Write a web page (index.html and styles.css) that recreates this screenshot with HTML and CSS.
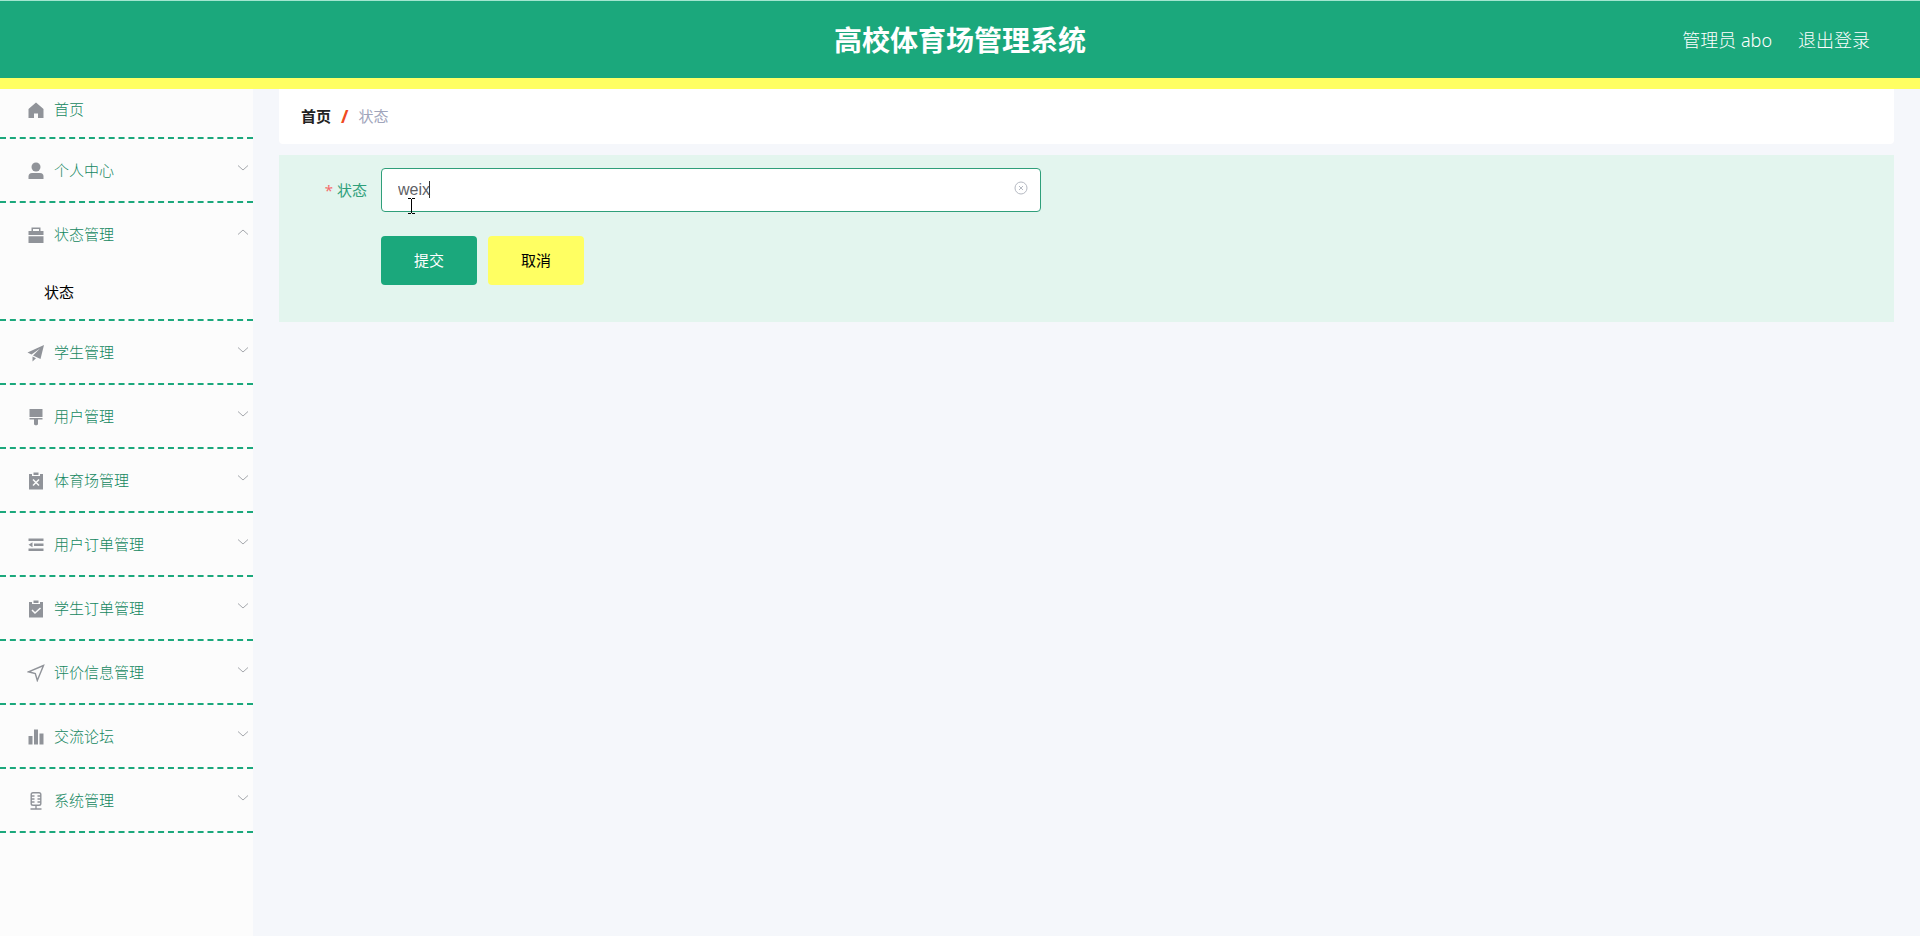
FILE: index.html
```html
<!DOCTYPE html>
<html lang="zh-CN">
<head>
  <meta charset="UTF-8">
  <meta name="viewport" content="width=device-width, initial-scale=1.0">
  <title>高校体育场管理系统</title>
  <link rel="stylesheet" href="styles.css">
</head>
<body>
  <svg class="sprite" aria-hidden="true">
    <symbol id="arrow" viewBox="0 0 12 12"><path d="M1 3.5l5 4.5 5-4.5" fill="none" stroke="#a5a8ad"/></symbol>
  </svg>

  <header class="header">
    <h1 class="title">高校体育场管理系统</h1>
    <div class="user">
      <span>管理员 abo</span>
      <a href="#">退出登录</a>
    </div>
  </header>

  <div class="layout">
    <nav class="sidebar">
      <ul class="menu">
        <li class="menu-home">
          <a class="menu-item" href="#">
            <svg class="icon" viewBox="0 0 18 18"><path d="M9 1.5L1.5 8v9H7v-4.5h4V17h5.500V8z"/></svg>
            <span>首页</span>
          </a>
        </li>
        <li>
          <a class="menu-item" href="#">
            <svg class="icon" viewBox="0 0 18 18"><circle cx="9" cy="5" r="4.500"/><path d="M1.500 17v-2.500q0-3.500 3.500-3.500h8q3.500 0 3.500 3.500V17z"/></svg>
            <span>个人中心</span>
            <svg class="arrow"><use href="#arrow"/></svg>
          </a>
        </li>
        <li>
          <a class="menu-item" href="#">
            <svg class="icon" viewBox="0 0 18 18"><path d="M4.500 5V1.500h9V5h3v4h-15V5zM6 5h6V3H6zM1.500 10.200h15V17h-15z" fill-rule="evenodd"/></svg>
            <span>状态管理</span>
            <svg class="arrow open"><use href="#arrow"/></svg>
          </a>
          <a class="submenu-item" href="#">状态</a>
        </li>
        <li>
          <a class="menu-item" href="#">
            <svg class="icon" viewBox="0 0 18 18"><path d="M17 1L.5 8.500l4 2L13 4.500l-7 7 7.500 3.500zM5.500 12.500V17.500L9 14.200z"/></svg>
            <span>学生管理</span>
            <svg class="arrow"><use href="#arrow"/></svg>
          </a>
        </li>
        <li>
          <a class="menu-item" href="#">
            <svg class="icon" viewBox="0 0 18 18"><path d="M2.500 1h13v8h-13zM2.500 10h13v1.500h-4.500v5l-2 1-2-1v-5H2.500z"/></svg>
            <span>用户管理</span>
            <svg class="arrow"><use href="#arrow"/></svg>
          </a>
        </li>
        <li>
          <a class="menu-item" href="#">
            <svg class="icon" viewBox="0 0 18 18"><path d="M2 2h3v2h8V2h3v15.500H2zM6.500.5h5V3h-5z"/><path d="M6 7.500l6 6M12 7.500l-6 6" class="cut"/></svg>
            <span>体育场管理</span>
            <svg class="arrow"><use href="#arrow"/></svg>
          </a>
        </li>
        <li>
          <a class="menu-item" href="#">
            <svg class="icon" viewBox="0 0 18 18"><path d="M1.500 2.500h15V5h-15zM7 7.500h9.500V10H7zM1.500 12.500h15V15h-15zM1.500 8.800l4-2.500v5z"/></svg>
            <span>用户订单管理</span>
            <svg class="arrow"><use href="#arrow"/></svg>
          </a>
        </li>
        <li>
          <a class="menu-item" href="#">
            <svg class="icon" viewBox="0 0 18 18"><path d="M2 2h3v2h8V2h3v15.500H2zM6.500.5h5V3h-5z"/><path d="M5 10l3 3 5.500-5" class="cut"/></svg>
            <span>学生订单管理</span>
            <svg class="arrow"><use href="#arrow"/></svg>
          </a>
        </li>
        <li>
          <a class="menu-item" href="#">
            <svg class="icon" viewBox="0 0 18 18"><path d="M16.500 1.500L1.500 7.800l6.800 1.700 2 7z" class="line"/></svg>
            <span>评价信息管理</span>
            <svg class="arrow"><use href="#arrow"/></svg>
          </a>
        </li>
        <li>
          <a class="menu-item" href="#">
            <svg class="icon" viewBox="0 0 18 18"><path d="M1.500 8h4v8.500h-4zM7 1.500h4v15H7zM12.500 5.500h4v11h-4z"/></svg>
            <span>交流论坛</span>
            <svg class="arrow"><use href="#arrow"/></svg>
          </a>
        </li>
        <li>
          <a class="menu-item" href="#">
            <svg class="icon" viewBox="0 0 18 18"><path d="M6 .8h6q1.800 0 1.800 1.800v8.800q0 1.800-1.800 1.800H6q-1.800 0-1.800-1.800V2.600Q4.200.8 6 .8zM9 13v4M3.500 17h11M4.500 4h3M4.500 7h3M4.500 10h3M13.500 4h-3M13.500 7h-3M13.500 10h-3" class="line"/></svg>
            <span>系统管理</span>
            <svg class="arrow"><use href="#arrow"/></svg>
          </a>
        </li>
      </ul>
    </nav>

    <main class="main">
      <div class="breadcrumb">
        <a href="#">首页</a>
        <span class="separator">/</span>
        <span class="current">状态</span>
      </div>

      <form class="form">
        <div class="form-row">
          <label class="label" for="status"><span class="required">*</span> 状态</label>
          <div class="field">
            <input class="input" id="status" type="text" value="weix">
            <span class="caret"></span>
            <button class="clear" type="button" aria-label="清空">
              <svg viewBox="0 0 14 14"><circle cx="7" cy="7" r="6"/><path d="M5 5l4 4M9 5l-4 4"/></svg>
            </button>
            <svg class="pointer" viewBox="0 0 7 16"><path d="M0 .5h3M4 .5h3M3.500 1v14M0 15.500h3M4 15.500h3"/></svg>
          </div>
        </div>
        <div class="buttons">
          <button class="btn btn-submit" type="button">提交</button>
          <button class="btn btn-cancel" type="button">取消</button>
        </div>
      </form>
    </main>
  </div>
</body>
</html>
```
FILE: styles.css
```css
* {
  box-sizing: border-box;
}
body {
  margin: 0;
  min-height: 100vh;
  display: flex;
  flex-direction: column;
  background: #f5f7fb;
  font-family: "Noto Sans", "Noto Sans CJK SC", sans-serif;
  font-size: 15px;
}
a {
  color: inherit;
  text-decoration: none;
}
.sprite {
  display: none;
}
.header {
  display: grid;
  grid-template-columns: 1fr auto 1fr;
  align-items: center;
  height: 89px;
  padding: 0 50px;
  background: #1ba87c;
  border-top: 1px solid #a3e6d0;
  border-bottom: 11px solid #ffff62;
  color: #fff;
}
.title {
  grid-column: 2;
  margin: 0;
  font-size: 28px;
  line-height: 40px;
}
.user {
  display: flex;
  justify-content: flex-end;
  gap: 26px;
  padding-bottom: 2px;
  font-size: 18px;
  font-weight: 300;
}
.layout {
  flex: 1;
  display: flex;
}
.sidebar {
  flex: 0 0 253px;
  background: #fcfcfc;
}
.menu {
  margin: 0;
  padding: 0;
  list-style: none;
}
.menu li {
  border-bottom: 2px dashed #1ba87c;
}
.menu-item {
  display: flex;
  align-items: center;
  gap: 9px;
  height: 62px;
  padding: 0 4px 2px 27px;
  color: #14875f;
  font-weight: 300;
}
.menu-home .menu-item {
  height: 48px;
  padding-bottom: 10px;
}
.icon {
  width: 18px;
  height: 18px;
  margin-top: 4px;
  fill: #909399;
}
.icon .cut {
  fill: none;
  stroke: #fcfcfc;
  stroke-width: 1.5;
}
.icon .line {
  fill: none;
  stroke: #909399;
  stroke-width: 1.4;
}
.arrow {
  width: 12px;
  height: 12px;
  margin: 0 0 2px auto;
}
.arrow.open {
  transform: rotate(180deg);
}
.submenu-item {
  display: block;
  height: 54px;
  padding-left: 44px;
  line-height: 54px;
  color: #000;
}
.main {
  flex: 1;
  padding: 0 26px;
}
.breadcrumb {
  display: flex;
  align-items: center;
  gap: 10px;
  height: 55px;
  padding: 0 22px 2px;
  background: #fff;
  border-radius: 0 0 4px 4px;
}
.breadcrumb a {
  color: #222;
  font-weight: bold;
}
.separator {
  color: #f04a22;
  font-size: 18px;
  font-weight: bold;
}
.current {
  color: #a0a5bb;
}
.form {
  margin-top: 11px;
  padding: 13px 0 37px;
  background: #e3f5ee;
}
.form-row {
  display: flex;
  align-items: center;
}
.label {
  width: 102px;
  padding: 0 14px 2px 0;
  text-align: right;
  color: #2f9f7a;
}
.required {
  color: #f56c6c;
}
.field {
  position: relative;
  flex: 0 1 660px;
}
.input {
  display: block;
  width: 100%;
  height: 44px;
  padding: 0 36px 0 16px;
  border: 1px solid #2f9f7a;
  border-radius: 4px;
  outline: none;
  background: #fff;
  color: #606266;
  font-family: "Liberation Sans", sans-serif;
  font-size: 16px;
}
.caret {
  position: absolute;
  left: 48px;
  top: 13px;
  width: 1px;
  height: 17px;
  background: #333;
}
.clear {
  position: absolute;
  right: 13px;
  top: 13px;
  width: 14px;
  height: 14px;
  padding: 0;
  border: 0;
  background: none;
}
.clear svg {
  display: block;
  fill: none;
  stroke: #b5b9c2;
}
.pointer {
  position: absolute;
  left: 27px;
  top: 30px;
  width: 7px;
  height: 16px;
  stroke: #000;
}
.buttons {
  display: flex;
  gap: 11px;
  margin: 24px 0 0 102px;
}
.btn {
  width: 96px;
  height: 49px;
  padding: 0 0 2px;
  border: 0;
  border-radius: 4px;
  font-family: inherit;
  font-size: 15px;
}
.btn-submit {
  background: #1ba87c;
  color: #fff;
}
.btn-cancel {
  background: #ffff62;
  color: #000;
}
```
